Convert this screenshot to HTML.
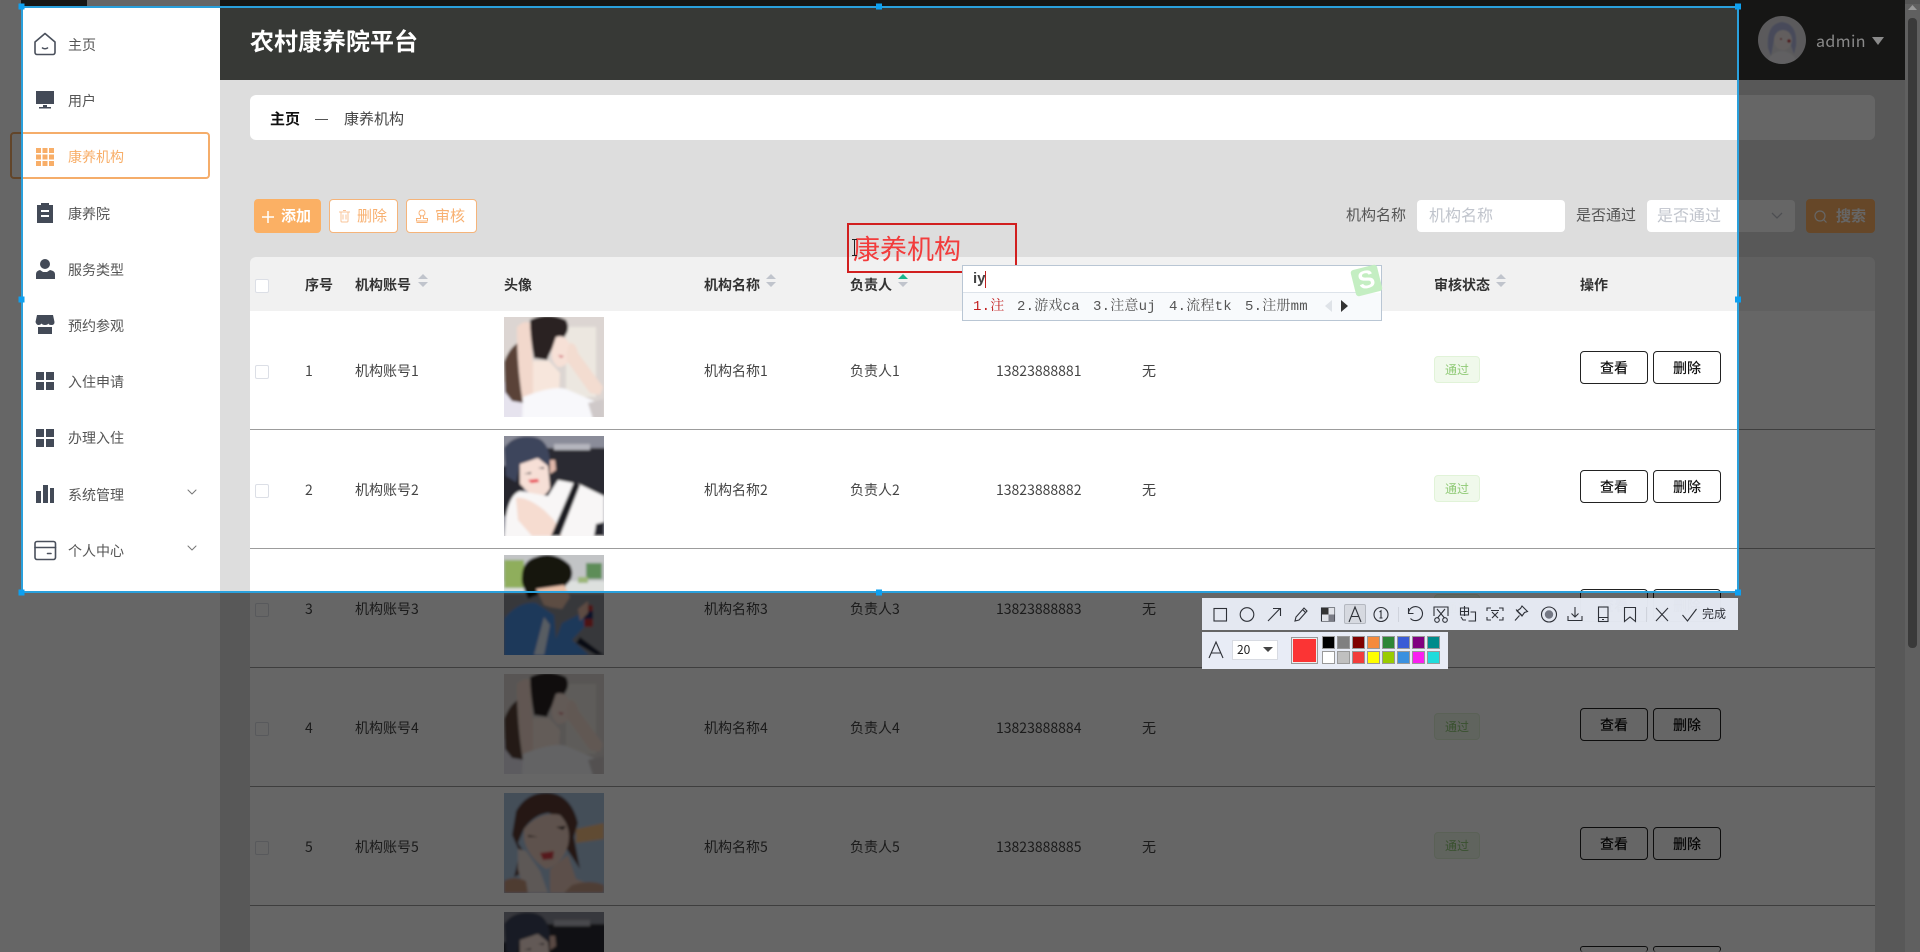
<!DOCTYPE html>
<html lang="zh"><head><meta charset="utf-8"><title>农村康养院平台</title>
<style>
*{box-sizing:border-box}
html,body{margin:0;padding:0;width:1920px;height:952px;overflow:hidden;background:#ddd}
body{position:relative;font-family:"Noto Sans CJK SC","Liberation Sans",sans-serif;font-size:14px;color:#444}
.a{position:absolute;white-space:nowrap}
.nav{position:absolute;left:68px;line-height:20px;font-size:14px;color:#555}
.head{position:absolute;top:275px;line-height:20px;font-weight:700;color:#333;font-size:14px}
.row{position:absolute;left:250px;width:1625px;height:119px;background:#fff}
.row+.row:after{content:"";position:absolute;left:0;right:0;top:0;height:1px;background:#9c9c9c}
.row span{position:absolute;top:51px;line-height:20px;color:#444;font-size:14px;white-space:nowrap}
.row i{position:absolute;left:5px;top:55px;width:14px;height:14px;background:#fff;border:1px solid #dcdfe6;border-radius:2px}
.row svg{position:absolute;left:254px;top:7px;width:100px;height:100px}
.row b{position:absolute;left:1184px;top:46px;width:46px;height:27px;background:#f0f9eb;border:1px solid #e1f3d8;border-radius:4px;color:#8fca75;font-weight:400;font-size:12px;line-height:26px;text-align:center}
.row u{position:absolute;top:41px;width:68px;height:33px;border:1px solid #222;border-radius:4px;background:#fff;color:#111;font-size:14px;line-height:32px;text-align:center;text-decoration:none;font-weight:500}
.btn{position:absolute;top:199px;height:34px;border-radius:4px;border:1px solid #f5b47a;background:#fff;color:#f8b070;font-size:15px;line-height:31px}
.ph{position:absolute;top:200px;height:32px;width:148px;background:#fff;border-radius:4px;color:#c0c4cc;font-size:16px;line-height:28px;padding-left:12px}
.sw{position:absolute;width:13px;height:13px;border:1px solid #999}
.cand{position:absolute;top:297px;line-height:20px;font-size:14px;color:#555;font-family:"Liberation Mono","Noto Serif CJK SC",monospace;white-space:nowrap;letter-spacing:.2px}
</style></head><body>

<svg width="0" height="0" style="position:absolute">
<defs>
<filter id="b1" x="-10%" y="-10%" width="120%" height="120%"><feGaussianBlur stdDeviation="1.4"/></filter>
<clipPath id="cp"><rect width="100" height="100"/></clipPath>
<symbol id="g1" viewBox="0 0 100 100"><g clip-path="url(#cp)"><g filter="url(#b1)">
<rect x="-5" y="-5" width="110" height="110" fill="#dcd5d2"/>
<rect x="62" y="10" width="30" height="70" fill="#ece7e0"/>
<rect x="-5" y="65" width="30" height="40" fill="#e6e3ee"/>
<path d="M0 45Q6 30 14 26L20 86L8 84L1 75Z" fill="#5a4238"/>
<path d="M13 10Q20 3 26 6L29 50L29 80L19 86Q13 50 13 10Z" fill="#f2d8cc"/>
<path d="M26 3Q44-6 62 3Q67 12 60 20Q50 24 43 43L30 41Q26 20 26 3Z" fill="#2a2120"/>
<path d="M52 20Q60 17 65 26L66 42Q62 50 54 50Q46 44 48 32Z" fill="#f6e0d6"/>
<path d="M29 44L45 44L56 56L55 76L29 78Z" fill="#f7e6dc"/>
<path d="M66 26Q72 26 74 36L99 70L96 78L86 76L63 44Q62 34 66 26Z" fill="#f3dcd0"/>
<path d="M19 80Q50 68 62 72L90 84L98 105L18 105Z" fill="#f8f8fb"/>
<path d="M84 86L100 82L100 105L90 105Z" fill="#cfc9c9"/>
<path d="M54 38l6 1-3 2z" fill="#d06070"/>
</g></g></symbol>
<symbol id="g2" viewBox="0 0 100 100"><g clip-path="url(#cp)"><g filter="url(#b1)">
<rect x="-5" y="-5" width="110" height="110" fill="#8a8c99"/>
<rect x="40" y="12" width="65" height="48" fill="#2a2a33"/>
<rect x="-5" y="30" width="25" height="50" fill="#25252d"/>
<rect x="50" y="8" width="36" height="6" fill="#b5b6be"/>
<path d="M0 12Q10-2 30 1Q46 4 46 28L40 30L32 22L16 30L12 46L2 40Z" fill="#3e445c"/>
<path d="M16 28L34 22L44 30L46 52Q40 64 28 60L16 48Z" fill="#f6dfd6"/>
<path d="M46 24l5 0 1 10-6 4z" fill="#e0b8aa"/>
<path d="M24 44l10-1 1 3-8 1z" fill="#e8394a"/>
<path d="M20 38l7-2 0 2zM34 32l6-1 0 2z" fill="#2a2a38"/>
<path d="M2 80Q6 58 16 55L44 60L54 44L75 48L100 60L100 86L100 105L0 105Z" fill="#f8f6f6"/>
<path d="M40 74Q22 60 12 62L14 84L28 100L58 100L50 84Z" fill="#f6dcd0"/>
<path d="M70 46l6 3-20 51-9 0z" fill="#1c1c20"/>
<path d="M92 88l8-2 0 14-10 0z" fill="#22222a"/>
</g></g></symbol>
<symbol id="g3" viewBox="0 0 100 100"><g clip-path="url(#cp)"><g filter="url(#b1)">
<rect x="-5" y="-5" width="110" height="36" fill="#c2c4c6"/>
<rect x="-5" y="26" width="110" height="16" fill="#dde0de"/>
<rect x="-5" y="38" width="110" height="70" fill="#8a8d94"/>
<rect x="0" y="5" width="20" height="28" fill="#8fae5c"/>
<rect x="82" y="8" width="16" height="16" fill="#5d8d58"/>
<rect x="74" y="22" width="10" height="6" fill="#9cb678"/>
<path d="M18 28Q16 6 32 2Q50-5 66 10Q72 22 62 30L56 42L34 40L24 44Z" fill="#17120f"/>
<path d="M32 34L60 30L66 42L58 54L46 52L40 50Z" fill="#e8c0a8"/>
<path d="M0 64Q14 46 32 48L50 60L52 84L58 68L78 58L82 70L68 85L85 100L0 105Z" fill="#4a8ee0"/>
<path d="M40 62L46 70L40 100L30 100Z" fill="#dce8f6"/>
<rect x="80" y="50" width="9" height="22" rx="2" fill="#c03030"/>
<rect x="80" y="56" width="9" height="8" fill="#1e2e68"/>
<path d="M74 54L84 46L84 58L76 66Z" fill="#e8bca8"/>
<path d="M76 82L100 100L92 100L72 88Z" fill="#151a30"/>
</g></g></symbol>
<symbol id="g5" viewBox="0 0 100 100"><g clip-path="url(#cp)"><g filter="url(#b1)">
<rect x="-5" y="-5" width="110" height="110" fill="#aac2dc"/>
<path d="M72 36L100 30L100 46L72 50Z" fill="#f0bb80"/>
<path d="M12 18Q24-3 48 0Q68 4 74 30L70 44L76 76L62 55Q60 24 44 20Q30 22 20 36L14 50L30 75L10 84L16 60L8 42Z" fill="#5c3a30"/>
<path d="M20 36Q36 18 56 22Q68 34 64 52Q58 72 42 76Q24 64 20 46Z" fill="#eccdc0"/>
<path d="M36 60l14-2-1 8-10 1z" fill="#d8404a"/>
<path d="M24 42l10 2-10 0zM52 34l10-1-3 4z" fill="#2a1c18"/>
<path d="M14 56L22 58L36 78L44 100L20 100L14 76Z" fill="#e8dcd8"/>
<path d="M46 76L64 62L72 86L88 92L88 100L46 100Z" fill="#e6c6b8"/>
<path d="M0 88Q10 82 22 88L24 100L0 100Z" fill="#c4967c"/>
<path d="M68 92Q86 86 100 92L100 100L60 100Z" fill="#c49c86"/>
</g></g></symbol>
</defs>
</svg>

<!-- sidebar -->
<div class="a" style="left:0;top:0;width:220px;height:952px;background:#fff"></div>
<div class="a" style="left:21px;top:0;width:66px;height:6px;background:#3a3b38"></div>
<div class="a" style="left:10px;top:132px;width:200px;height:47px;border:2px solid #f5ad6a;border-radius:4px"></div>
<svg class="a" style="left:0;top:0" width="220" height="600" viewBox="0 0 220 600">
<g fill="none" stroke="#4a505c" stroke-width="1.600" stroke-linejoin="round" stroke-linecap="round">
<path d="M35 42L45 33.500L55 42V52.500a2 2 0 0 1-2 2H37a2 2 0 0 1-2-2Z"/><path d="M42.500 48q2.500 1.500 5 0"/>
<rect x="35" y="541.500" width="20.500" height="18" rx="2"/><path d="M35 547.500H55.500M47.500 553.500H51"/>
<path d="M188 490l4 4 4-4M188 546l4 4 4-4" stroke="#777" stroke-width="1"/>
</g>
<g fill="#434a57">
<path d="M36 91h18v13H36zM43 105h4v2h4v1.500H39V107h4z"/>
<path d="M37 205h4v-2h8v2h4v18H37zM41 210v2h8v-2zM41 215v2h8v-2z" fill-rule="evenodd"/>
<circle cx="45" cy="264" r="5"/><path d="M36 279v-5q0-3 4-4l3 2h4l3-2q5 1 5 4v5z"/>
<path d="M37 315h16l1.500 7q0 3-3 3t-3-1.500q-1 1.500-3.500 1.500t-3.500-1.500q-1 1.500-3 1.500t-3-3zM38 327h14v7H38z"/>
<path d="M36 372h8v8h-8zM46 372h8v8h-8zM36 382h8v8h-8zM46 382h8v8h-8z"/>
<path d="M36 429h8v8h-8zM46 429h8v8h-8zM36 439h8v8h-8zM46 439h8v8h-8z"/>
<path d="M36 491h5v12h-5zM43 485h5v18h-5zM50 488h4v15h-4z"/>
</g>
<g fill="#f8ae68">
<path d="M36 148h5v5h-5zM42.500 148h5v5h-5zM49 148h5v5h-5zM36 154.500h5v5h-5zM42.500 154.500h5v5h-5zM49 154.500h5v5h-5zM36 161h5v5h-5zM42.500 161h5v5h-5zM49 161h5v5h-5z"/>
</g>
</svg>
<div class="nav" style="top:35px">主页</div>
<div class="nav" style="top:91px">用户</div>
<div class="nav" style="top:147px;color:#f8ae68">康养机构</div>
<div class="nav" style="top:204px">康养院</div>
<div class="nav" style="top:260px">服务类型</div>
<div class="nav" style="top:316px">预约参观</div>
<div class="nav" style="top:372px">入住申请</div>
<div class="nav" style="top:428px">办理入住</div>
<div class="nav" style="top:485px">系统管理</div>
<div class="nav" style="top:541px">个人中心</div>

<!-- header -->
<div class="a" style="left:220px;top:0;width:1685px;height:80px;background:#373936"></div>
<div class="a" style="left:250px;top:22px;font-size:24px;line-height:36px;font-weight:700;color:#fff">农村康养院平台</div>
<svg class="a" style="left:1758px;top:16px" width="48" height="48" viewBox="0 0 48 48">
<defs><clipPath id="av"><circle cx="24" cy="24" r="24"/></clipPath><filter id="b2"><feGaussianBlur stdDeviation=".9"/></filter></defs>
<g clip-path="url(#av)"><rect width="48" height="48" fill="#e4e2e6"/>
<g filter="url(#b2)"><path d="M10 32Q8 8 24 6Q40 8 38 30L36 38L31 24L16 24L13 40Z" fill="#b4bae2"/>
<ellipse cx="25" cy="24" rx="9" ry="10" fill="#f4ecea"/>
<path d="M8 48Q12 36 24 35Q36 36 40 48Z" fill="#f2f1f4"/>
<circle cx="31" cy="25" r="1.800" fill="#c84048"/><circle cx="23" cy="23" r="1" fill="#c05058"/></g></g></svg>

<!-- breadcrumb -->
<div class="a" style="left:250px;top:95px;width:1625px;height:45px;background:#fff;border-radius:6px"></div>
<div class="a" style="left:270px;top:108px;font-size:15px;line-height:22px;font-weight:700;color:#111">主页</div>
<div class="a" style="left:315px;top:119px;width:13px;height:1px;background:#555"></div>
<div class="a" style="left:344px;top:108px;font-size:15px;line-height:22px;color:#444">康养机构</div>

<!-- actions -->
<div class="btn" style="left:254px;width:67px;background:#fbb064;border-color:#fbb064;color:#fff;padding-left:26px;font-weight:700">添加</div>
<svg class="a" style="left:261px;top:210px" width="14" height="14"><path d="M7 1v12M1 7h12" stroke="#fff" stroke-width="1.500"/></svg>
<div class="btn" style="left:329px;width:69px;padding-left:27px">删除</div>
<svg class="a" style="left:338px;top:209px" width="13" height="14" fill="none" stroke="#f9c49a" stroke-width="1"><path d="M1 3h11M3 3v9a1 1 0 0 0 1 1h5a1 1 0 0 0 1-1V3M5 1.500h3M5 5.500v5M8 5.500v5"/></svg>
<div class="btn" style="left:406px;width:71px;padding-left:28px">审核</div>
<svg class="a" style="left:415px;top:209px" width="14" height="14" fill="none" stroke="#f9b47a" stroke-width="1"><circle cx="7" cy="4" r="3"/><path d="M5.500 7v2.500H1.500v2.500h11V9.500H8.500V7M1.500 13.500h11"/></svg>

<div class="a" style="left:1346px;top:204px;font-size:15px;line-height:22px;color:#555">机构名称</div>
<div class="ph" style="left:1417px">机构名称</div>
<div class="a" style="left:1576px;top:204px;font-size:15px;line-height:22px;color:#555">是否通过</div>
<div class="ph" style="left:1647px;padding-left:10px">是否通过</div>
<svg class="a" style="left:1771px;top:211px" width="12" height="10" fill="none" stroke="#c0c4cc" stroke-width="1.300"><path d="M1 2l5 5 5-5"/></svg>
<div class="btn" style="left:1806px;width:69px;background:#ffb265;border-color:#ffb265;color:#fff;padding-left:29px;font-weight:700">搜索</div>
<svg class="a" style="left:1813px;top:209px" width="15" height="15" fill="none" stroke="#fff" stroke-width="1.200"><circle cx="7" cy="7" r="5"/><path d="M10.500 10.500l3 3"/></svg>

<!-- table header -->
<div class="a" style="left:250px;top:257px;width:1625px;height:54px;background:#f1f1f1;border-radius:6px 6px 0 0"></div>
<div class="a" style="left:255px;top:279px;width:14px;height:14px;background:#fff;border:1px solid #dcdfe6;border-radius:2px"></div>
<div class="head" style="left:305px">序号</div>
<div class="head" style="left:355px">机构账号</div>
<div class="head" style="left:504px">头像</div>
<div class="head" style="left:704px">机构名称</div>
<div class="head" style="left:850px">负责人</div>
<div class="head" style="left:995px">联系电话</div>
<div class="head" style="left:1142px">备注</div>
<div class="head" style="left:1434px">审核状态</div>
<div class="head" style="left:1580px">操作</div>
<svg class="a" style="left:0;top:271px" width="1600" height="30">
<g fill="#c0c4cc"><path d="M418 8h10l-5-5zM418 11h10l-5 5z"/><path d="M766 8h10l-5-5zM766 11h10l-5 5z"/><path d="M1496 8h10l-5-5zM1496 11h10l-5 5z"/><path d="M898 11h10l-5 5z"/></g>
<path d="M898 8h10l-5-5z" fill="#18b48c"/></svg>

<!-- rows -->
<div class="row" style="top:311px;height:118px"><i style="top:54px"></i><span style="left:55px;top:50px">1</span><span style="left:105px;top:50px">机构账号1</span><svg style="top:6px"><use href="#g1"/></svg><span style="left:454px;top:50px">机构名称1</span><span style="left:600px;top:50px">负责人1</span><span style="left:746px;top:50px">13823888881</span><span style="left:892px;top:50px">无</span><b style="top:45px">通过</b><u style="left:1330px;top:40px">查看</u><u style="left:1403px;top:40px">删除</u></div>
<div class="row" style="top:429px"><i></i><span style="left:55px">2</span><span style="left:105px">机构账号2</span><svg><use href="#g2"/></svg><span style="left:454px">机构名称2</span><span style="left:600px">负责人2</span><span style="left:746px">13823888882</span><span style="left:892px">无</span><b>通过</b><u style="left:1330px">查看</u><u style="left:1403px">删除</u></div>
<div class="row" style="top:548px"><i></i><span style="left:55px">3</span><span style="left:105px">机构账号3</span><svg><use href="#g3"/></svg><span style="left:454px">机构名称3</span><span style="left:600px">负责人3</span><span style="left:746px">13823888883</span><span style="left:892px">无</span><b>通过</b><u style="left:1330px">查看</u><u style="left:1403px">删除</u></div>
<div class="row" style="top:667px"><i></i><span style="left:55px">4</span><span style="left:105px">机构账号4</span><svg><use href="#g1"/></svg><span style="left:454px">机构名称4</span><span style="left:600px">负责人4</span><span style="left:746px">13823888884</span><span style="left:892px">无</span><b>通过</b><u style="left:1330px">查看</u><u style="left:1403px">删除</u></div>
<div class="row" style="top:786px"><i></i><span style="left:55px">5</span><span style="left:105px">机构账号5</span><svg><use href="#g5"/></svg><span style="left:454px">机构名称5</span><span style="left:600px">负责人5</span><span style="left:746px">13823888885</span><span style="left:892px">无</span><b>通过</b><u style="left:1330px">查看</u><u style="left:1403px">删除</u></div>
<div class="row" style="top:905px;height:47px;overflow:hidden"><svg style="height:40px"><use href="#g2" width="100" height="100"/></svg><u style="left:1330px;height:6px;border-bottom:0;overflow:hidden"></u><u style="left:1403px;height:6px;border-bottom:0;overflow:hidden"></u></div>

<!-- annotation -->
<div class="a" style="left:847px;top:223px;width:170px;height:50px;border:2px solid #d11f1f"></div>
<div class="a" style="left:853px;top:228px;font-size:27px;line-height:40px;color:#f23c3c;font-weight:400">康养机构</div>
<svg class="a" style="left:851px;top:239px" width="8" height="18" fill="none" stroke="#222"><path d="M1 .5h5M3.500 .5v16M1 16.500h5"/></svg>

<!-- IME -->
<div class="a" style="left:962px;top:265px;width:420px;height:56px;background:#fff;border:1px solid #b9c6d4"></div>
<div class="a" style="left:963px;top:292px;width:400px;height:1px;background:#dde3ea"></div>
<div class="a" style="left:963px;top:293px;width:418px;height:27px;background:#f8fafc"></div>
<div class="a" style="left:973px;top:269px;font-size:15px;line-height:20px;color:#444;font-family:'Liberation Sans',sans-serif;font-weight:700">iy</div>
<div class="a" style="left:985px;top:271px;width:1px;height:17px;background:#c02020"></div>
<div class="cand" style="left:973px;color:#c21f1f">1.注</div>
<div class="cand" style="left:1017px">2.游戏ca</div>
<div class="cand" style="left:1093px">3.注意uj</div>
<div class="cand" style="left:1169px">4.流程tk</div>
<div class="cand" style="left:1245px">5.注册mm</div>
<svg class="a" style="left:1322px;top:299px" width="30" height="14"><path d="M10 1v12L3 7z" fill="#dfe3e8"/><path d="M19 1v12l7-6z" fill="#333"/></svg>
<div class="a" style="left:1353px;top:267px;width:27px;height:27px;background:#c4eec2;border-radius:3px;transform:rotate(-14deg);color:#fff;font:700 25px/26px 'Liberation Sans',sans-serif;text-align:center">S</div>

<!-- scrollbar -->
<div class="a" style="left:1905px;top:0;width:15px;height:952px;background:#f0f0f0"></div>

<!-- selection + dim -->
<div class="a" style="left:21px;top:6px;width:1718px;height:587px;border:2px solid #2aa0dc;box-shadow:0 0 0 3000px rgba(0,0,0,.6)"></div>
<div class="a" style="left:1908px;top:18px;width:9px;height:630px;background:#3a3a3a;border-radius:4px"></div>
<svg class="a" style="left:1905px;top:4px" width="15" height="8"><path d="M3 6h9L7.500 1z" fill="#999"/></svg>
<div class="a" style="left:1905px;top:0;width:15px;height:4px;background:#555"></div>
<div class="a" style="left:1816px;top:28px;font-size:16px;line-height:24px;color:#8a8a8a;letter-spacing:.4px">admin</div>
<div class="a" style="left:1872px;top:37px;width:0;height:0;border-left:6px solid transparent;border-right:6px solid transparent;border-top:8px solid #8a8a8a"></div>
<svg class="a" style="left:0;top:0" width="1760" height="600"><g fill="#0ea0f0">
<rect x="18.500" y="3.500" width="6" height="6"/><rect x="876" y="3.500" width="6" height="6"/><rect x="1735" y="3.500" width="6" height="6"/>
<rect x="18.500" y="296.500" width="6" height="6"/><rect x="1735" y="296.500" width="6" height="6"/>
<rect x="18.500" y="589.500" width="6" height="6"/><rect x="876" y="589.500" width="6" height="6"/><rect x="1735" y="589.500" width="6" height="6"/></g></svg>

<!-- toolbars -->
<div class="a" style="left:1202px;top:598px;width:536px;height:32px;background:rgba(232,236,246,.97)"></div>
<div class="a" style="left:1202px;top:632px;width:246px;height:37px;background:#e8ecf6"></div>
<div class="a" style="left:1344px;top:604px;width:22px;height:20px;background:#d6d9e0;border:1px solid #b4b8c0;border-radius:2px"></div>
<svg class="a" style="left:0;top:590px" width="1760" height="90" viewBox="0 590 1760 90">
<g fill="none" stroke="#2e3138" stroke-width="1.100">
<rect x="1214" y="608.500" width="12.500" height="12.500"/>
<circle cx="1247" cy="614.500" r="6.800"/>
<path d="M1268 621L1280 608.500M1273 608.500H1280.500V616"/>
<path d="M1295 621l1-4 8-9 3 3-8 9zM1302.500 609.500l3 3"/>
<rect x="1321.500" y="608" width="13" height="13"/>
<path d="M1349 622L1355 607L1361 622M1351 616.500h8"/>
<circle cx="1381" cy="614.500" r="7"/><path d="M1379.500 612l1.500-1.200v7M1379.500 618h3"/>
<path d="M1408.500 613.500a7 7 0 1 1 2 5M1408.500 608v5.500h5"/>
<path d="M1434 616v-9h14v9"/><path d="M1437 609l7.500 9M1445 609l-7.500 9"/><circle cx="1437" cy="620" r="2.300"/><circle cx="1445" cy="620" r="2.300"/>
<path d="M1460.500 608h8v7h-8zM1464.500 606v10M1460.500 611.500h8M1470.500 612h5v9h-7M1461 617l2 3h3"/>
<path d="M1487 611v-3h4M1499 608h4v3M1487 617v3h4M1503 617v3h-4M1491 610.500h8M1492 612l6 6M1498 612l-6 6"/>
<path d="M1516 609.500l6.500 6.500M1522 606l5.500 5.500-3 1-2.500 3.500-5-5 3.500-2.500zM1519.500 615.500l-4.500 5"/>
<circle cx="1549" cy="614.500" r="7.500"/>
<path d="M1568 616v4.500h14V616M1575 607v10M1571.500 613.500l3.500 3.500 3.500-3.500"/>
<rect x="1598.500" y="607" width="9.500" height="14.500"/><path d="M1598.500 617.500h9.500M1602 619.500h2"/>
<path d="M1624.500 607.500h11v14l-5.500-4.500-5.500 4.500z"/>
<path d="M1656 608l12 13M1668 608l-12 13"/>
<path d="M1682.500 615l5 6 9-12"/>
</g>
<g stroke="#cfd3dc" stroke-width="1"><path d="M1398.500 607v15M1646.500 607v15"/></g>
<path d="M1322 608h6.500v6.500H1322z" fill="#333"/>
<path d="M1328.500 608h6v6.500h-6zM1322 614.500h6.500v6.500H1322z" fill="#e0e2e8"/>
<path d="M1328.500 614.500h6v6.500h-6z" fill="#7a7c86"/>
<circle cx="1549" cy="614.500" r="4.200" fill="#747884"/>
<path d="M1209 658L1216 642L1223 658M1211.500 653h9" fill="none" stroke="#2e3138" stroke-width="1.100"/>
</svg>
<div class="a" style="left:1702px;top:605px;font-size:12px;line-height:18px;color:#2e3138">完成</div>
<div class="a" style="left:1232px;top:640px;width:46px;height:20px;background:#fff;border:1px solid #d8dbe2;padding-left:4px;font-size:12px;line-height:18px;color:#222">20</div>
<div class="a" style="left:1263px;top:647px;width:0;height:0;border-left:5px solid transparent;border-right:5px solid transparent;border-top:5px solid #444"></div>
<div class="a" style="left:1291px;top:637px;width:27px;height:27px;background:#fb3434;border:1px solid #999;outline:1px solid #eee;outline-offset:-2px"></div>
<div class="sw" style="left:1322px;top:636px;background:#000"></div>
<div class="sw" style="left:1337px;top:636px;background:#808080"></div>
<div class="sw" style="left:1352px;top:636px;background:#800000"></div>
<div class="sw" style="left:1367px;top:636px;background:#f58a3c"></div>
<div class="sw" style="left:1382px;top:636px;background:#2e8636"></div>
<div class="sw" style="left:1397px;top:636px;background:#3a5cd6"></div>
<div class="sw" style="left:1412px;top:636px;background:#800080"></div>
<div class="sw" style="left:1427px;top:636px;background:#008b8b"></div>
<div class="sw" style="left:1322px;top:651px;background:#fff"></div>
<div class="sw" style="left:1337px;top:651px;background:#c0c0c0"></div>
<div class="sw" style="left:1352px;top:651px;background:#f23c3c"></div>
<div class="sw" style="left:1367px;top:651px;background:#ffff00"></div>
<div class="sw" style="left:1382px;top:651px;background:#99cc00"></div>
<div class="sw" style="left:1397px;top:651px;background:#3a90e0"></div>
<div class="sw" style="left:1412px;top:651px;background:#f81ff0"></div>
<div class="sw" style="left:1427px;top:651px;background:#1fdcdc"></div>
</body></html>
